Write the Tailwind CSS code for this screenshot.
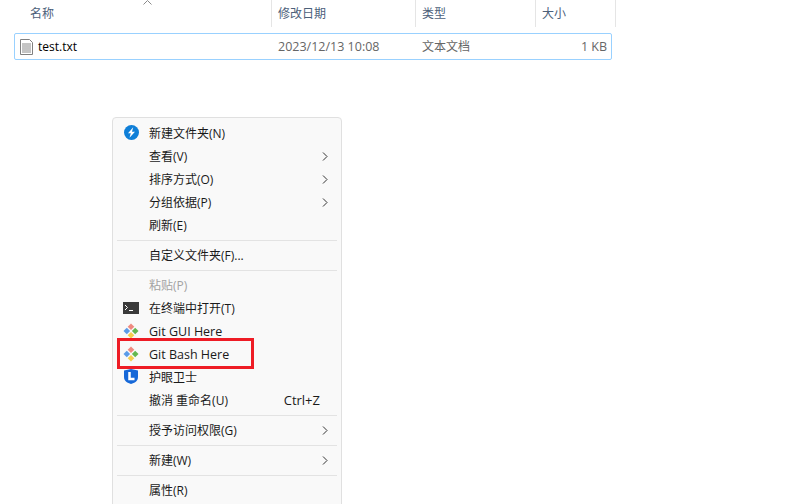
<!DOCTYPE html>
<html lang="zh-CN">
<head>
    <meta charset="UTF-8">
    <title>test.txt</title>
    <script src="https://cdn.jsdelivr.net/npm/@tailwindcss/browser@4"></script>
</head>
<body class="w-[806px] h-[504px] overflow-hidden bg-white relative font-['Open_Sans','Noto_Sans_CJK_SC',sans-serif] text-[12px]">
    <!-- Column headers -->
    <div class="relative flex h-[27px] text-[#4c607a]">
        <svg class="absolute left-[143px] top-0" width="9" height="5" viewBox="0 0 9 5" fill="none" stroke="#8a8a8a"><path d="M.5 4.500 4.500.5l4 4"/></svg>
        <div class="w-[272px] pl-[30px] pt-[5px] border-r border-[#e5e5e5]">名称</div>
        <div class="w-[144px] pl-[6px] pt-[5px] border-r border-[#e5e5e5]">修改日期</div>
        <div class="w-[120px] pl-[6px] pt-[5px] border-r border-[#e5e5e5]">类型</div>
        <div class="w-[80px] pl-[6px] pt-[5px] border-r border-[#e5e5e5]">大小</div>
    </div>

    <!-- File row -->
    <div class="flex items-center h-[27px] w-[598px] mt-[6px] ml-[14px] border border-[#99d1ff] rounded-[2px] text-[#666]">
        <svg class="ml-[5px]" width="13" height="16" viewBox="0 0 13 16" fill="none">
            <path d="M.5.5h9l3 3v12H.5z" fill="#fff" stroke="#808080"/>
            <path d="M2 5h9M2 7h9M2 9h9M2 11h9M2 13h9" stroke="#8a8a8a"/>
        </svg>
        <span class="w-[240px] ml-[5px] pt-px text-black text-[12px]">test.txt</span>
        <span class="w-[144px] pt-px text-[12.5px]">2023/12/13 10:08</span>
        <span class="w-[120px]">文本文档</span>
        <span class="w-[65px] pt-px text-right text-[12.5px]">1 KB</span>
    </div>

    <!-- Context menu -->
    <div class="absolute left-[112px] top-[117px] w-[230px] h-[400px] pt-[4px] bg-[#f9f9f9] border border-[#e0e0e0] rounded-[4px] text-[#1a1a1a]">
        <div class="flex items-center h-[23px] pl-[36px] relative">
            <svg class="absolute left-[11px] top-[3px]" width="15" height="15" viewBox="0 0 15 15"><circle cx="7.500" cy="7.500" r="7.500" fill="#0f7fd8"/><path d="M9.200 2.300 4 8.200h2.800l-1.300 4.500L11 6.800H8z" fill="#fff"/></svg>
            新建文件夹(N)
        </div>
        <div class="flex items-center justify-between h-[23px] pl-[36px] pr-[13px]">查看(V)<svg width="6" height="9" viewBox="0 0 6 9" fill="none" stroke="#333"><path d="m1 .5 4 4-4 4"/></svg></div>
        <div class="flex items-center justify-between h-[23px] pl-[36px] pr-[13px]">排序方式(O)<svg width="6" height="9" viewBox="0 0 6 9" fill="none" stroke="#333"><path d="m1 .5 4 4-4 4"/></svg></div>
        <div class="flex items-center justify-between h-[23px] pl-[36px] pr-[13px]">分组依据(P)<svg width="6" height="9" viewBox="0 0 6 9" fill="none" stroke="#333"><path d="m1 .5 4 4-4 4"/></svg></div>
        <div class="flex items-center h-[23px] pl-[36px]">刷新(E)</div>
        <div class="h-[7px] pt-[3px]"><div class="h-px mx-[4px] bg-[#e3e3e3]"></div></div>
        <div class="flex items-center h-[23px] pl-[36px]">自定义文件夹(F)...</div>
        <div class="h-[7px] pt-[3px]"><div class="h-px mx-[4px] bg-[#e3e3e3]"></div></div>
        <div class="flex items-center h-[23px] pl-[36px] text-[#a3a3a3]">粘贴(P)</div>
        <div class="flex items-center h-[23px] pl-[36px] relative">
            <svg class="absolute left-[10px] top-[5px]" width="16" height="12" viewBox="0 0 16 12" fill="none"><rect width="16" height="12" fill="#3a3a3a"/><path d="m2 3 2.500 2.500L2 8" stroke="#fff"/><path d="M6 8.500h4" stroke="#fff"/></svg>
            在终端中打开(T)
        </div>
        <div class="flex items-center h-[23px] pl-[36px] relative">
            <svg class="absolute left-[10px] top-[3px]" width="16" height="16" viewBox="0 0 16 16"><path d="M8 .5 11.300 3.800 8 7.100 4.700 3.800z" fill="#ef8a80"/><path d="M3.800 4.700 7.100 8 3.800 11.300 .5 8z" fill="#5b9be8"/><path d="M12.200 4.700 15.500 8 12.200 11.300 8.900 8z" fill="#63b84f"/><path d="M8 8.900 11.300 12.200 8 15.500 4.700 12.200z" fill="#f5cf4d"/></svg>
            <span class="pt-[2px] text-[12.500px]">Git GUI Here</span>
        </div>
        <div class="flex items-center h-[23px] pl-[36px] relative">
            <svg class="absolute left-[10px] top-[3px]" width="16" height="16" viewBox="0 0 16 16"><path d="M8 .5 11.300 3.800 8 7.100 4.700 3.800z" fill="#ef8a80"/><path d="M3.800 4.700 7.100 8 3.800 11.300 .5 8z" fill="#5b9be8"/><path d="M12.200 4.700 15.500 8 12.200 11.300 8.900 8z" fill="#63b84f"/><path d="M8 8.900 11.300 12.200 8 15.500 4.700 12.200z" fill="#f5cf4d"/></svg>
            <span class="pt-[2px] text-[12.500px]">Git Bash Here</span>
        </div>
        <div class="flex items-center h-[23px] pl-[36px] relative">
            <svg class="absolute left-[11px] top-[3px]" width="14" height="15" viewBox="0 0 14 15"><path d="M0 1.500 7 0l7 1.500V8c0 4-3.500 6-7 7-3.500-1-7-3-7-7z" fill="#1668d8"/><path d="M5.500 3v7h5" fill="none" stroke="#fff" stroke-width="2.500"/></svg>
            护眼卫士
        </div>
        <div class="flex items-center justify-between h-[23px] pl-[36px] pr-[21px]">撤消 重命名(U)<span class="text-[13px]">Ctrl+Z</span></div>
        <div class="h-[7px] pt-[3px]"><div class="h-px mx-[4px] bg-[#e3e3e3]"></div></div>
        <div class="flex items-center justify-between h-[23px] pl-[36px] pr-[13px]">授予访问权限(G)<svg width="6" height="9" viewBox="0 0 6 9" fill="none" stroke="#333"><path d="m1 .5 4 4-4 4"/></svg></div>
        <div class="h-[7px] pt-[3px]"><div class="h-px mx-[4px] bg-[#e3e3e3]"></div></div>
        <div class="flex items-center justify-between h-[23px] pl-[36px] pr-[13px]">新建(W)<svg width="6" height="9" viewBox="0 0 6 9" fill="none" stroke="#333"><path d="m1 .5 4 4-4 4"/></svg></div>
        <div class="h-[7px] pt-[3px]"><div class="h-px mx-[4px] bg-[#e3e3e3]"></div></div>
        <div class="flex items-center h-[23px] pl-[36px]">属性(R)</div>
    </div>

    <!-- Red highlight round Git Bash Here -->
    <div class="absolute left-[117px] top-[338px] w-[137px] h-[31px] border-[3px] border-[#ee1c25]"></div>
</body>
</html>
